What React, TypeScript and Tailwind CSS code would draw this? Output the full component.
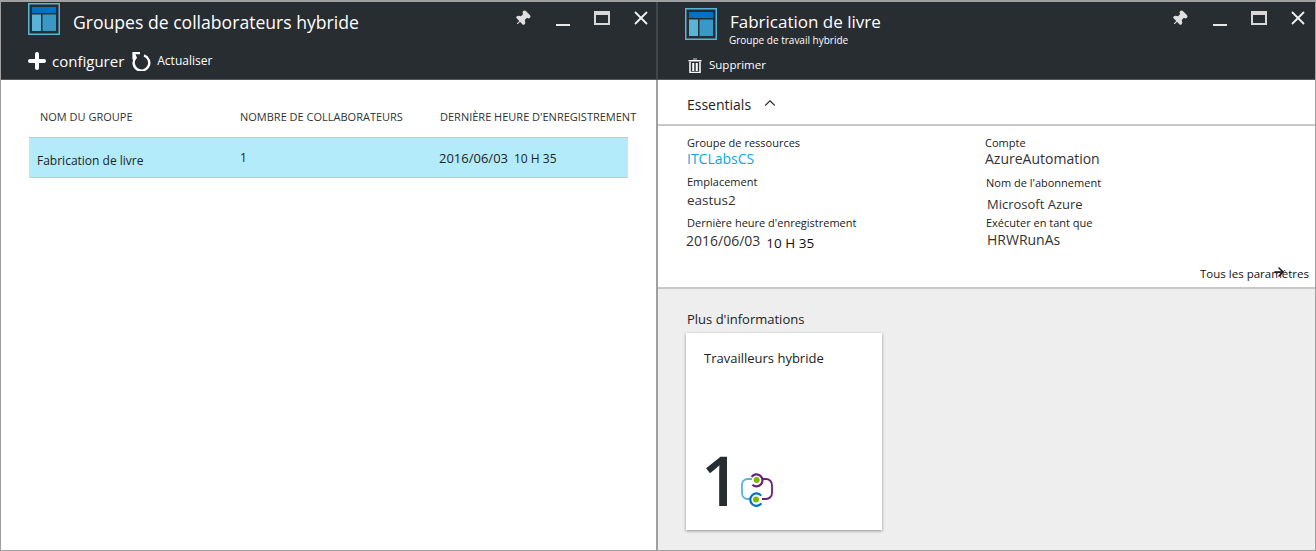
import React from 'react';
import { ArrowRight, ChevronUp, Pin, Plus, X } from 'lucide-react';

const font = "font-['Open_Sans','Liberation_Sans',sans-serif]";

function BladeIcon({ className }: { className: string }) {
  return (
    <svg viewBox="0 0 32 32" className={className}>
      <rect x="0.75" y="0.75" width="30.5" height="30.5" fill="#282d32" stroke="#59b4d9" strokeWidth="1.5" />
      <rect x="4" y="4" width="24" height="6" fill="#0072c6" />
      <rect x="4" y="11.5" width="9" height="16.5" fill="#59b4d9" />
      <rect x="14.5" y="11.5" width="13.5" height="16.5" fill="#3999c6" />
    </svg>
  );
}

function WindowControls() {
  return (
    <div className="flex items-start">
      <Pin className="w-[17px] h-[17px] -mt-[1px] rotate-45 text-[#e0e0e0] fill-[#e0e0e0]" strokeWidth={1.5} />
      <div className="ml-[25px] mt-[13px] w-[14px] h-[2px] bg-[#e8e8e8]" />
      <div className="ml-[24px] w-[16px] h-[14px] border-2 border-t-4 border-[#d8d8d8]" />
      <X className="ml-[20px] -mt-[4px] w-[22px] h-[22px] text-[#f0f0f0]" strokeWidth={2} />
    </div>
  );
}

function RefreshIcon() {
  return (
    <svg viewBox="0 0 19 19" className="ml-[8px] w-[19px] h-[19px]" fill="none" stroke="white" strokeWidth="2.4">
      <path d="M12 3.4A7.8 7.8 0 1 1 3.6 5.6L1.6 1" />
      <path d="M1.6 7.5V1H8" />
    </svg>
  );
}

function TrashIcon() {
  return (
    <svg viewBox="0 0 14 15" className="w-[14px] h-[15px]" fill="none" stroke="white">
      <path d="M5 1h4" stroke="#9a9a9a" strokeWidth="1.5" />
      <path d="M0.5 2.75h13" strokeWidth="1.5" />
      <path d="M2 4v10.5h10V4" strokeWidth="1.5" />
      <path d="M5.25 5v8M8.75 5v8" strokeWidth="2" />
    </svg>
  );
}

function Field({ label, value, className, valueClass }: { label: string; value: React.ReactNode; className: string; valueClass: string }) {
  return (
    <div className={className}>
      <div className="text-[11px] leading-[14px] text-[#222]">{label}</div>
      <div className={valueClass}>{value}</div>
    </div>
  );
}

function HybridIcon() {
  return (
    <svg viewBox="0 0 34 34" className="w-[34px] h-[34px] ml-[1px] mb-[6px]" fill="none">
      <path d="M11 6H6.5A5.5 5.5 0 0 0 1 11.5v9A5.5 5.5 0 0 0 6.5 26H10" stroke="#59b4d9" strokeWidth="1.8" />
      <path d="M21 6h4a6 6 0 0 1 6 6v8a6 6 0 0 1-6 6h-4" stroke="#68217a" strokeWidth="1.8" />
      <path d="M10.6 3.8A6 6 0 1 1 11.4 11.8" stroke="#68217a" strokeWidth="2.2" />
      <path d="M20.2 22.6A6.2 6.2 0 1 0 20.4 30.4" stroke="#0072c6" strokeWidth="2.2" />
      <circle cx="15.7" cy="7" r="3" fill="#7fba00" />
      <circle cx="15" cy="26.5" r="3" fill="#7fba00" />
    </svg>
  );
}

export default function App() {
  return (
    <div className={`${font} w-[1316px] h-[551px] flex overflow-hidden bg-white border border-[#a0a0a0] border-t-2 text-[#222]`}>
      {/* left blade */}
      <div className="w-[657px] shrink-0 flex flex-col">
        <div className="h-[78px] bg-[#282d32] text-white border-b border-r-2 border-b-[#55595d] border-r-[#41464b] pl-[27px] pr-[4px]">
          <div className="flex items-start">
            <BladeIcon className="w-[32px] h-[32px] mt-[1px]" />
            <div className="ml-[13px] mt-[6px] text-[17.6px] leading-[28px]">Groupes de collaborateurs hybride</div>
            <div className="ml-auto mt-[9px]"><WindowControls /></div>
          </div>
          <div className="flex items-center mt-[13px]">
            <Plus className="w-[24px] h-[24px] text-white -ml-[3px]" strokeWidth={4} />
            <span className="ml-[3px] text-[15px] leading-[20px]">configurer</span>
            <RefreshIcon />
            <span className="ml-[6px] -mt-[1px] text-[12px] leading-[16px]">Actualiser</span>
          </div>
        </div>
        <div className="flex-1 border-r-2 border-[#a0a0a0] pt-[30px] pl-[28px]">
          <div className="flex pl-[11px] text-[11px] leading-[14px] text-[#333] whitespace-nowrap">
            <div className="w-[200px]">NOM DU GROUPE</div>
            <div className="w-[200px]">NOMBRE DE COLLABORATEURS</div>
            <div>DERNIÈRE HEURE D'ENREGISTREMENT</div>
          </div>
          <div className="mt-[13px] w-[599px] h-[41px] flex bg-[#b4ebfa] border-y border-[#c8c8c8] text-[12px] text-[#222]">
            <div className="w-[211px] pl-[8px] pt-[15px] leading-[16px]">Fabrication de livre</div>
            <div className="w-[199px] pt-[12px] leading-[16px]">1</div>
            <div className="pt-[12px] text-[13px] leading-[16px]">2016/06/03<span className="ml-[6px] text-[12px]">10 H 35</span></div>
          </div>
        </div>
      </div>

      {/* right blade */}
      <div className="flex-1 flex flex-col">
        <div className="h-[78px] bg-[#282d32] text-white border-b border-[#55595d] pl-[27px] pr-[6px]">
          <div className="flex items-start">
            <BladeIcon className="w-[32px] h-[32px] mt-[6px]" />
            <div className="ml-[13px] mt-[9px]">
              <div className="text-[17px] leading-[22px]">Fabrication de livre</div>
              <div className="-ml-[1px] text-[10px] leading-[14px]">Groupe de travail hybride</div>
            </div>
            <div className="ml-auto mt-[9px]"><WindowControls /></div>
          </div>
          <div className="flex items-center mt-[10px] pl-[3px]">
            <TrashIcon />
            <span className="ml-[7px] text-[11.5px] leading-[16px]">Supprimer</span>
          </div>
        </div>
        <div className="h-[46px] flex items-center pl-[29px] pt-[5px] border-b-2 border-[#c8c8c8] text-[14px]">
          Essentials
          <ChevronUp className="ml-[10px] -mt-[3px] w-[18px] h-[18px] text-[#333]" strokeWidth={1.5} />
        </div>
        <div className="h-[163px] relative border-b-2 border-[#c8c8c8] flex pl-[29px] pt-[10px]">
          <div className="w-[298px]">
            <Field label="Groupe de ressources" value="ITCLabsCS" className="h-[39px]" valueClass="-mt-[1px] text-[14px] leading-[20px] text-[#0fa5e0]" />
            <Field label="Emplacement" value="eastus2" className="h-[41px]" valueClass="text-[13.5px] leading-[20px] mt-[1px] text-[#333]" />
            <Field
              label="Dernière heure d'enregistrement"
              value={<>2016/06/03<span className="ml-[6px] relative top-[2px] text-[13.5px] text-[#111]">10 H 35</span></>}
              className=""
              valueClass="-ml-[1px] text-[14px] leading-[20px] mt-[1px] text-[#333]"
            />
          </div>
          <div>
            <Field label="Compte" value="AzureAutomation" className="h-[40px]" valueClass="-mt-[1px] text-[14px] leading-[20px] text-[#333]" />
            <Field label="Nom de l'abonnement" value="Microsoft Azure" className="h-[33px] pl-[1px]" valueClass="pl-[1px] text-[13px] leading-[20px] mt-[4px] text-[#333]" />
            <Field label="Exécuter en tant que" value="HRWRunAs" className="mt-[7px] pl-[1px]" valueClass="pl-[1px] text-[14px] leading-[20px] text-[#333]" />
          </div>
          <div className="absolute right-[6px] bottom-[6px] text-[11.5px] leading-[14px] text-[#111]">
            Tous les paramètres
            <ArrowRight className="absolute right-[22px] -top-[2px] w-[16px] h-[14px] text-[#111]" strokeWidth={2.5} />
          </div>
        </div>
        <div className="flex-1 bg-[#eeeeee] pl-[28px] pt-[21px]">
          <div className="ml-[1px] text-[13px] leading-[18px]">Plus d'informations</div>
          <div className="mt-[5px] w-[196px] h-[197px] bg-white shadow-[0_1px_3px_rgba(0,0,0,0.4)] px-[18px] pt-[15px] pb-[17px] flex flex-col justify-between">
            <div className="text-[13px] leading-[20px]">Travailleurs hybride</div>
            <div className="flex items-end h-[66px]">
              <span className="-ml-[3px] text-[68px] leading-[66px] font-semibold text-[#282d32]">1</span>
              <HybridIcon />
            </div>
          </div>
        </div>
      </div>
    </div>
  );
}
